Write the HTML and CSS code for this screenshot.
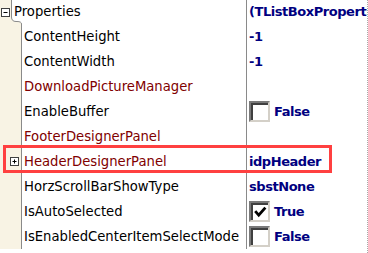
FILE: index.html
```html
<!DOCTYPE html>
<html>
<head>
<meta charset="utf-8">
<link rel="stylesheet" href="styles.css">
</head>
<body>
<div class="inspector">
  <div class="row row-root">
    <svg class="root-tree" width="23" height="25" viewBox="0 0 23 25">
      <path d="M0 0 H11.5 V18 Q11.5 22.5 16 22.5 H17 Q21.5 22.5 21.5 25 H0 Z" fill="#f8f3e4"/>
      <path d="M11.5 0 V18 Q11.5 22.5 16 22.5 H17 Q21.5 22.5 21.5 25" fill="none" stroke="#8a8a8a" stroke-width="1"/>
      <rect x="1.5" y="9.5" width="8" height="8" fill="#fff" stroke="#404040"/>
      <path d="M3.5 13.5 H7.5" stroke="#000" stroke-width="1"/>
    </svg>
    <div class="gutter-root"></div>
    <div class="name name-root">Properties</div>
    <div class="value">(TListBoxProperties)</div>
  </div>
  <div class="row">
    <div class="gutter"></div>
    <div class="name">ContentHeight</div>
    <div class="value">-1</div>
  </div>
  <div class="row">
    <div class="gutter"></div>
    <div class="name">ContentWidth</div>
    <div class="value">-1</div>
  </div>
  <div class="row">
    <div class="gutter"></div>
    <div class="name ref">DownloadPictureManager</div>
    <div class="value"></div>
  </div>
  <div class="row">
    <div class="gutter"></div>
    <div class="name">EnableBuffer</div>
    <div class="value"><span class="check"></span><span>False</span></div>
  </div>
  <div class="row">
    <div class="gutter"></div>
    <div class="name ref">FooterDesignerPanel</div>
    <div class="value"></div>
  </div>
  <div class="row">
    <div class="gutter">
      <svg class="expander" width="10" height="10" viewBox="0 0 10 10">
        <rect x="0.5" y="0.5" width="8" height="8" fill="#fff" stroke="#404040"/>
        <path d="M2.5 4.5 H6.5 M4.5 2.5 V6.5" stroke="#000" stroke-width="1"/>
      </svg>
    </div>
    <div class="name ref">HeaderDesignerPanel</div>
    <div class="value">idpHeader</div>
  </div>
  <div class="row">
    <div class="gutter"></div>
    <div class="name">HorzScrollBarShowType</div>
    <div class="value">sbstNone</div>
  </div>
  <div class="row">
    <div class="gutter"></div>
    <div class="name">IsAutoSelected</div>
    <div class="value"><span class="check"><svg width="17" height="17" viewBox="0 0 17 17"><path d="M2.5 7 L6.5 11.5 L14 3" fill="none" stroke="#000" stroke-width="3.2"/></svg></span><span>True</span></div>
  </div>
  <div class="row">
    <div class="gutter"></div>
    <div class="name">IsEnabledCenterItemSelectMode</div>
    <div class="value"><span class="check"></span><span>False</span></div>
  </div>
  <div class="highlight"></div>
</div>
</body>
</html>
```

FILE: styles.css
```css
html, body {
  margin: 0;
  padding: 0;
  background: #fff;
}
body {
  width: 368px;
  height: 253px;
  overflow: hidden;
}
.inspector {
  position: relative;
  width: 367px;
  height: 253px;
  border-right: 1px dotted #a8a8a8;
  font-family: "DejaVu Sans", sans-serif;
  font-size: 13.2px;
  color: #000;
  overflow: hidden;
}
.row {
  display: flex;
  height: 25px;
  line-height: 25px;
  white-space: nowrap;
}
.row:first-child {
  margin-top: -1px;
}
.row-root {
  position: relative;
}
.root-tree {
  position: absolute;
  left: 0;
  top: 0;
}
.gutter-root {
  flex: 0 0 12px;
}
.gutter {
  flex: 0 0 21px;
  background: #f8f3e4;
  border-right: 1px solid #8a8a8a;
  display: flex;
  align-items: center;
}
.expander {
  margin-left: 10px;
  margin-top: 1px;
}
.name {
  flex: 0 0 222px;
  padding-left: 2px;
  overflow: hidden;
}
.name-root {
  flex: 0 0 232px;
  padding-left: 2px;
}
.ref {
  color: #800000;
}
.value {
  flex: 1 1 auto;
  min-width: 0;
  border-left: 1px solid #8a8a8a;
  padding-left: 2px;
  overflow: hidden;
  font-size: 13px;
  font-weight: bold;
  letter-spacing: -0.45px;
  color: #000080;
  display: flex;
  align-items: center;
  gap: 4px;
}
.check {
  flex: 0 0 auto;
  box-sizing: border-box;
  width: 21px;
  height: 21px;
  background: #fff;
  border-style: solid;
  border-width: 2px;
  border-color: #7a7a7a #d4d0c8 #d4d0c8 #7a7a7a;
  box-shadow: inset 2px 2px 0 #404040;
  display: flex;
  align-items: center;
  justify-content: center;
}
.check svg {
  display: block;
  margin: 2px 0 0 2px;
}
.highlight {
  position: absolute;
  left: 3px;
  top: 145px;
  width: 329px;
  height: 28px;
  box-sizing: border-box;
  border: 3px solid #ff4040;
  pointer-events: none;
}
```
